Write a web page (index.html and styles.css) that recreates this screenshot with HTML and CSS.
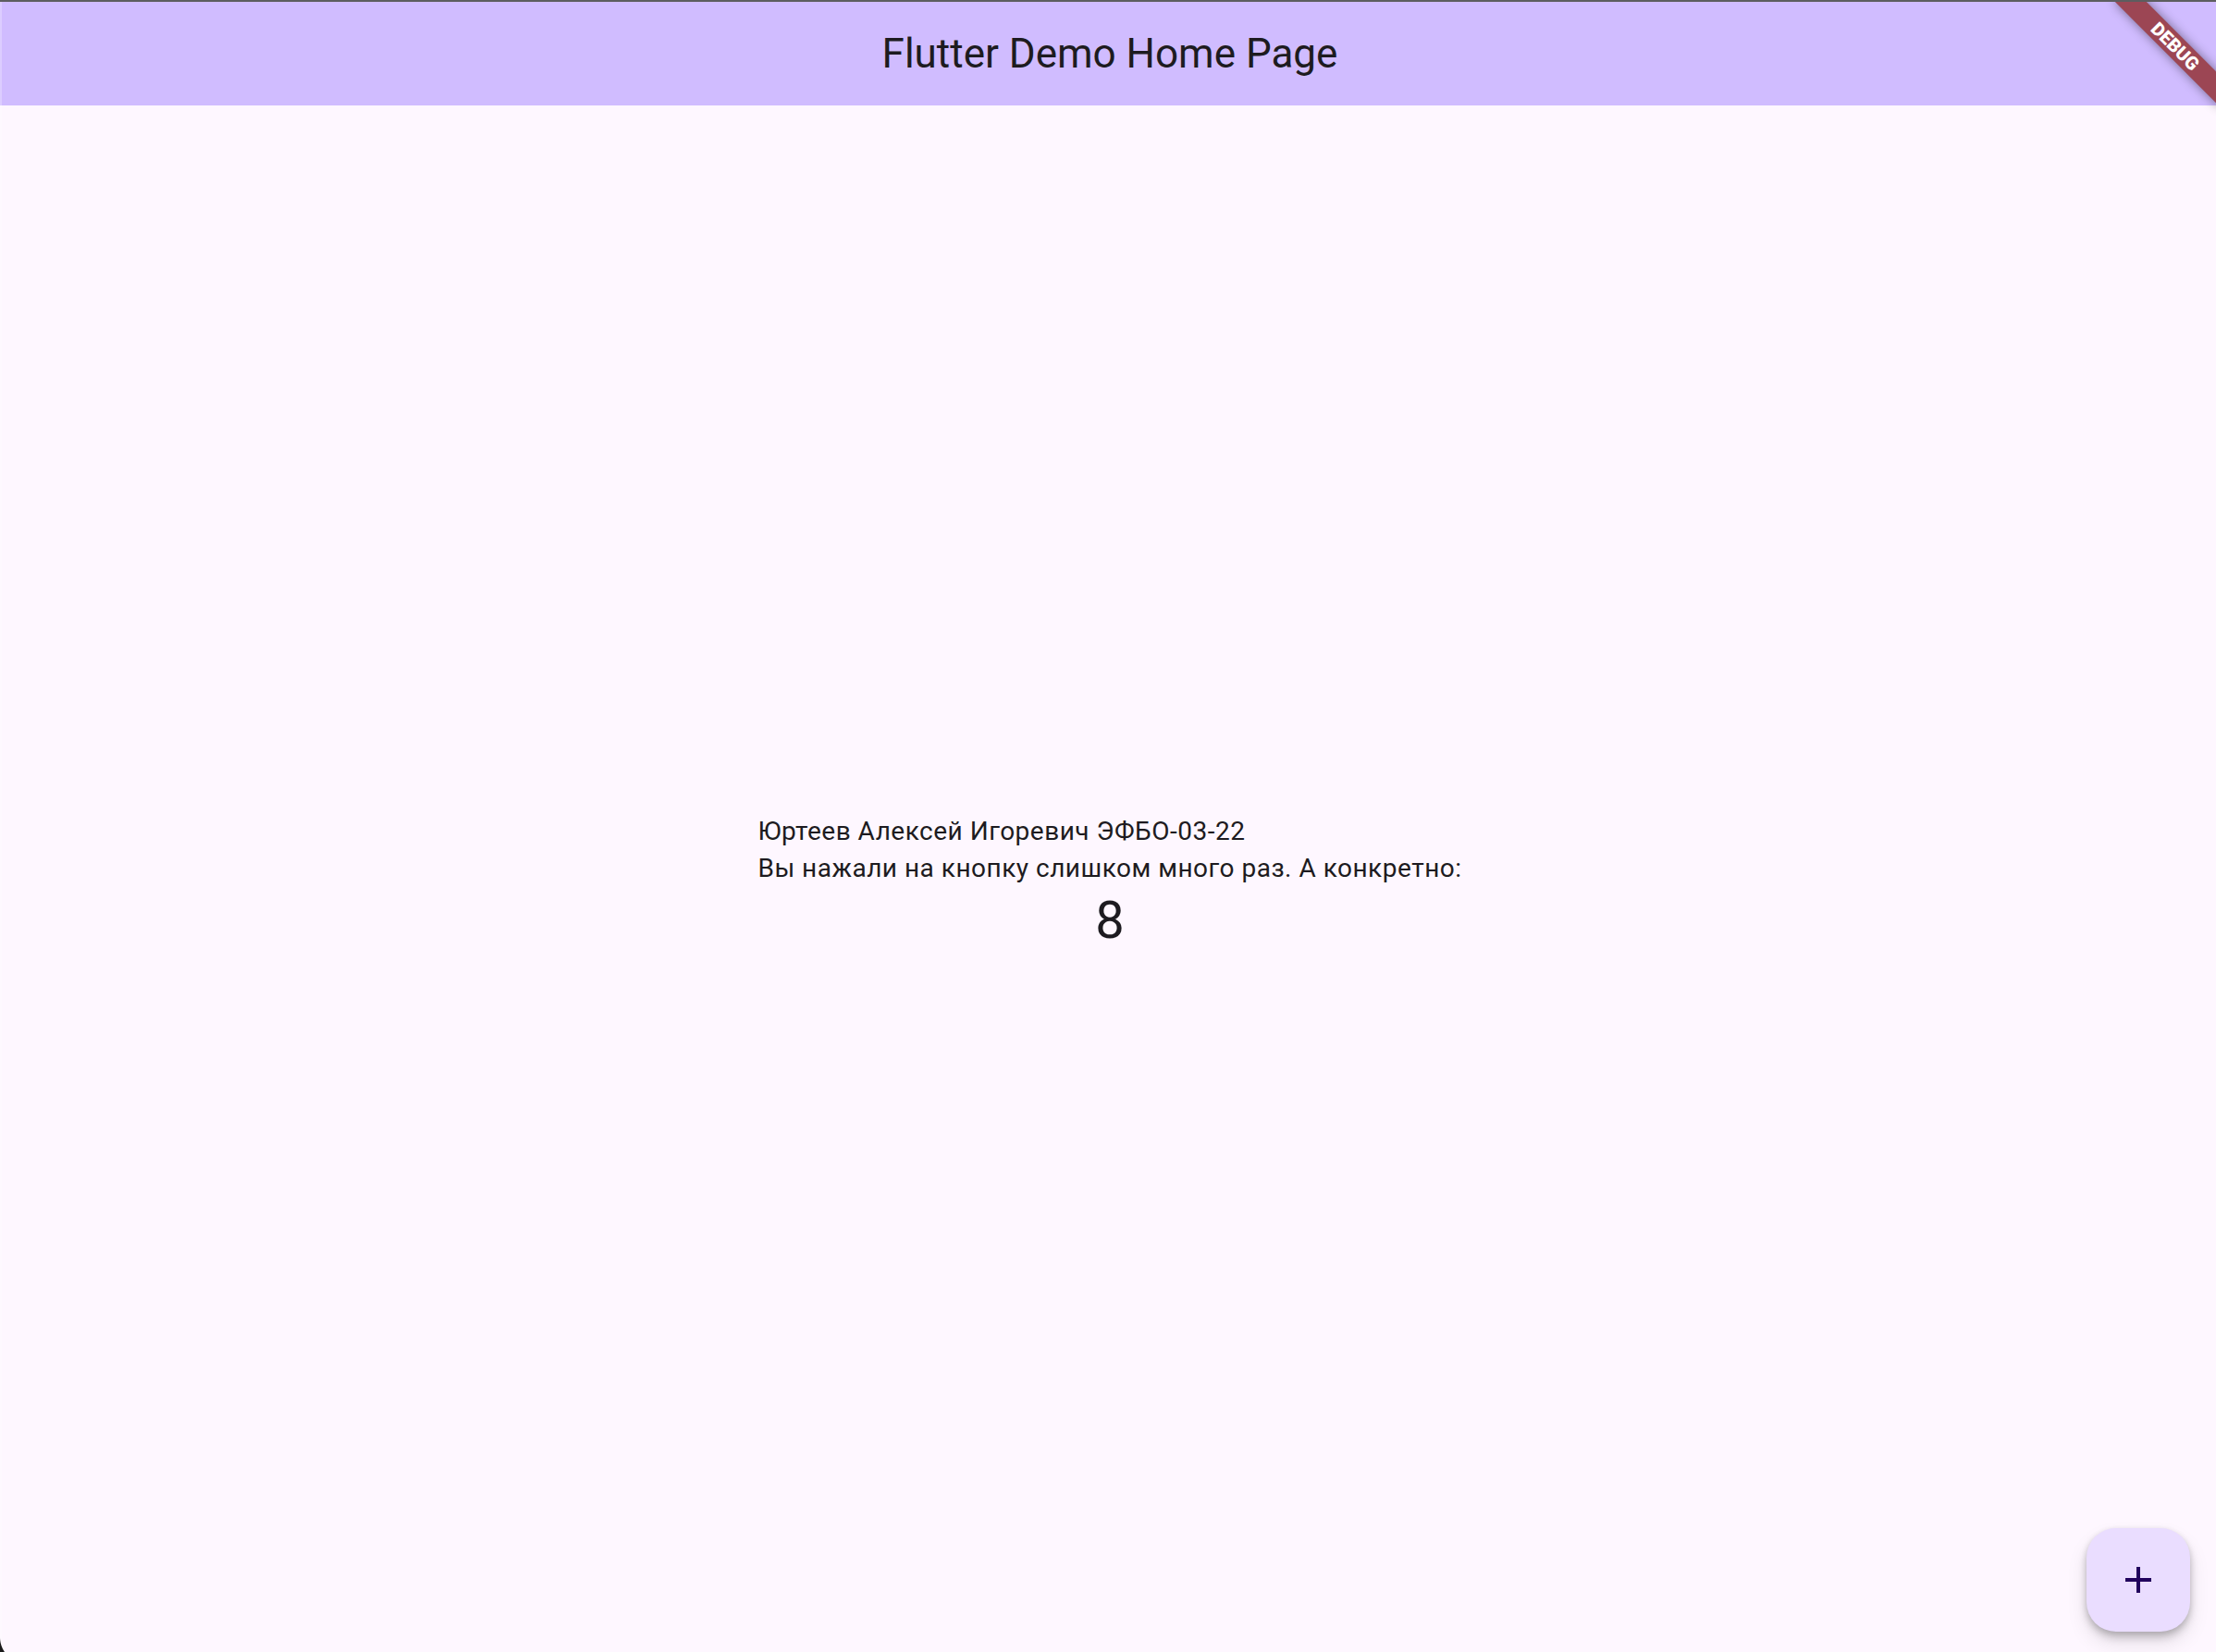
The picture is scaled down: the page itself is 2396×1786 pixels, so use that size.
FILE: index.html
```html
<!DOCTYPE html>
<html lang="ru">
<head>
<meta charset="utf-8">
<title>Flutter Demo Home Page</title>
<link rel="stylesheet" href="styles.css">
</head>
<body>
<div class="frame">
  <div class="view">
    <header class="appbar">
      <h1 class="title">Flutter Demo Home Page</h1>
    </header>
    <main class="content">
      <div class="column">
        <p class="body-text">Юртеев Алексей Игоревич ЭФБО-03-22</p>
        <p class="body-text">Вы нажали на кнопку слишком много раз. А конкретно:</p>
        <p class="counter">8</p>
      </div>
    </main>
    <button class="fab" aria-label="Increment">
      <svg class="fab-icon" viewBox="0 0 24 24" width="48" height="48"><path d="M19 13h-6v6h-2v-6H5v-2h6V5h2v6h6v2z" fill="currentColor"/></svg>
    </button>
    <div class="banner-pivot"><div class="banner">DEBUG</div></div>
  </div>
  <div class="edge-left"></div>
  <div class="corner-bl"></div>
</div>
</body>
</html>
```
FILE: styles.css
```css
html, body {
  margin: 0;
  padding: 0;
  width: 2396px;
  height: 1786px;
  overflow: hidden;
  background: #fef7ff;
}

.frame {
  position: relative;
  width: 2400px;
  height: 1796px;
  border-top: 2px solid #5d5d5f;
  box-sizing: border-box;
  font-family: Roboto, "Noto Sans", sans-serif;
  color: #1d1b20;
}

.view {
  position: relative;
  display: flex;
  flex-direction: column;
  height: 1794px;
  overflow: hidden;
}

.appbar {
  flex: 0 0 112px;
  height: 112px;
  background: #d0bcff;
  display: flex;
  align-items: center;
  justify-content: center;
}

.title {
  margin: 0;
  font-size: 44px;
  font-weight: 400;
  line-height: 56px;
  color: #1d1b20;
}

.content {
  flex: 1;
  display: flex;
  align-items: center;
  justify-content: center;
}

.column {
  display: flex;
  flex-direction: column;
  align-items: flex-start;
}

.body-text {
  margin: 0;
  font-size: 28px;
  line-height: 40px;
  letter-spacing: 0.5px;
  color: #1d1b20;
}

.counter {
  margin: 0;
  align-self: center;
  font-size: 56px;
  line-height: 72px;
  color: #1d1b20;
}

.fab {
  position: absolute;
  right: 32px;
  bottom: 32px;
  width: 112px;
  height: 112px;
  border: none;
  border-radius: 32px;
  background: #eaddff;
  color: #21005d;
  display: flex;
  align-items: center;
  justify-content: center;
  padding: 0;
  box-shadow: 0 6px 10px rgba(0, 0, 0, 0.18), 0 12px 22px rgba(0, 0, 0, 0.1), 0 2px 6px rgba(0, 0, 0, 0.1);
}

.fab-icon {
  display: block;
}

.banner-pivot {
  position: absolute;
  top: 0;
  right: 0;
  width: 0;
  height: 0;
  transform: rotate(45deg);
  transform-origin: 0 0;
}

.banner {
  position: absolute;
  left: -80px;
  top: 56px;
  width: 160px;
  height: 24px;
  background: #9c4654;
  box-shadow: 0 0 12px rgba(0, 0, 0, 0.45);
  color: #ffffff;
  font-family: Roboto, "Noto Sans", sans-serif;
  font-size: 20px;
  font-weight: 900;
  line-height: 24px;
  text-align: center;
}

.edge-left {
  position: absolute;
  left: 0;
  top: 0;
  width: 2px;
  height: 100%;
  background: rgba(255, 255, 255, 0.25);
}

.corner-bl {
  position: absolute;
  left: 0;
  top: 1768px;
  width: 28px;
  height: 18px;
  background: radial-gradient(circle 28px at 28px 0, transparent 27.5px, #1b1b1b 28.5px);
}
```
